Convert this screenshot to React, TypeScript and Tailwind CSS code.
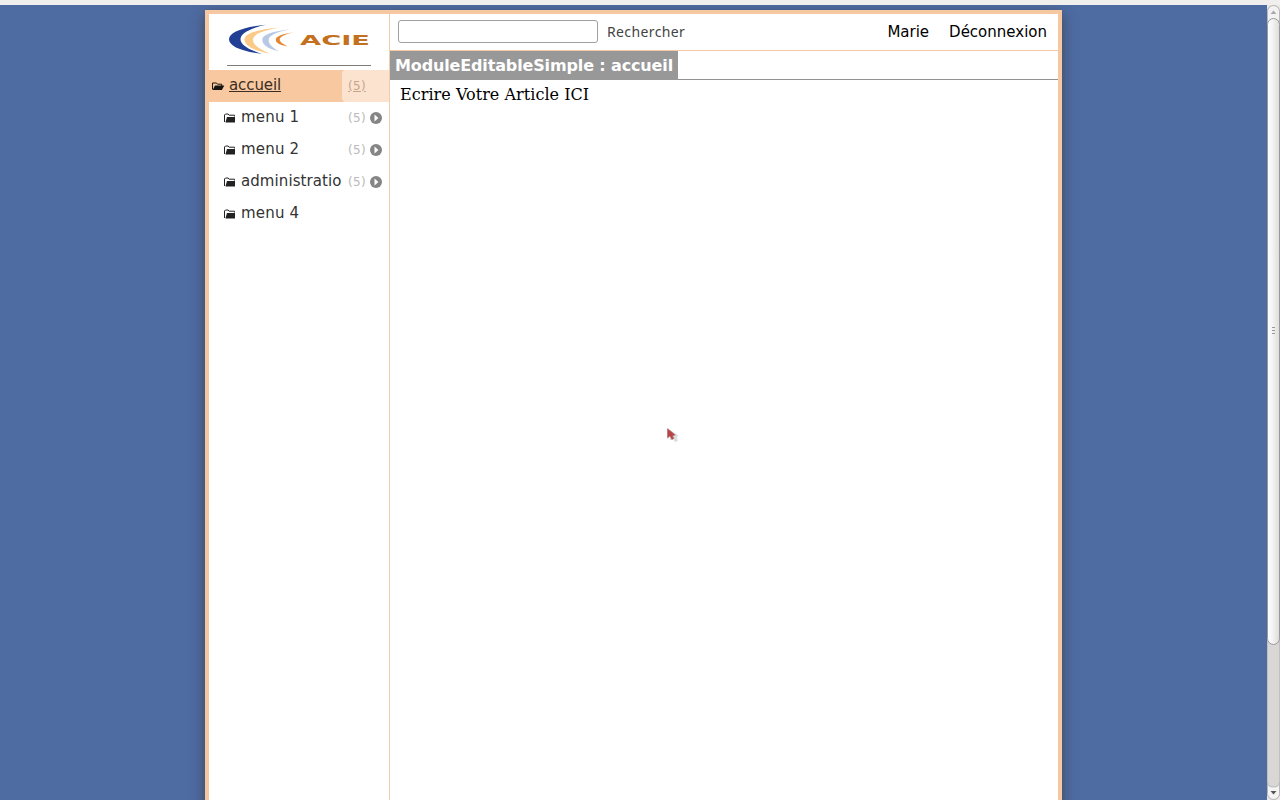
import React from "react";

function Folder({ open = false }: { open?: boolean }) {
  return open ? (
    <svg width="13" height="10" viewBox="0 0 13 10" className="shrink-0">
      <path d="M.5 8.5V2h4l1 1.2h4.2V5" fill="none" stroke="#171512" strokeWidth="1" />
      <path d="M3 4.6h9.300L9.900 9H.6z" fill="#171512" />
    </svg>
  ) : (
    <svg width="12" height="10" viewBox="0 0 12 10" className="shrink-0">
      <path d="M.5 9V2l1-1h2.600l1 1.200h5.400V3.500" fill="none" stroke="#222" strokeWidth="1" />
      <path d="M3 4H11v5.600H1.400z" fill="#222" />
    </svg>
  );
}

function Arrow() {
  return (
    <svg width="12" height="12" viewBox="0 0 12 12" className="ml-1 shrink-0">
      <circle cx="6" cy="6" r="6" fill="#858585" />
      <path d="M4.500 2.600 8.400 6 4.500 9.400z" fill="#fff" />
    </svg>
  );
}

function Logo() {
  return (
    <svg width="144" height="34" viewBox="227 22 144 34">
      <path d="M266 24.700C242 27 229 32.500 229 39.300S241 51.500 262 53.800C248 49.500 240.500 44.500 240.500 39.200C240.500 33.500 249 28.500 266 24.700Z" fill="#213f94" />
      <path d="M280 27.500C256 29.500 244.500 34 244.500 39.500S252 50.500 270 53.500C258 49 253 44.500 253 39.800C253 34.500 262 30.500 280 27.500Z" fill="#fbca86" />
      <path d="M290 29.300C271 31.500 262.300 35 262.300 39.700S267 48.500 279 51.300C272 47.500 268.700 44 268.700 40C268.700 35.500 276 32.300 290 29.300Z" fill="#b9c9e5" />
      <path d="M294 32.200C281 34 275.800 36.500 275.800 39.700S279.500 44.700 287.500 46.500C282 43.500 279.700 41.800 279.700 39.600C279.700 36.500 285 34.300 294 32.200Z" fill="#e58532" />
      <text x="300" y="45" fontFamily="DejaVu Sans" fontWeight="700" fontSize="14" textLength="70" lengthAdjust="spacingAndGlyphs" fill="#c37020">ACIE</text>
    </svg>
  );
}

const items = [
  { label: "menu 1", count: true },
  { label: "menu 2", count: true },
  { label: "administratio", count: true },
  { label: "menu 4", count: false },
];

function Sidebar() {
  return (
    <aside className="w-[181px] shrink-0 border-r border-[#f2cda9]">
      <div className="mx-[18px] mb-1 h-[52px] border-b border-[#7c7c7c] pt-2">
        <Logo />
      </div>
      <div className="flex h-8 bg-[#f8c9a0] text-[#3b2d24]">
        <div className="flex w-[133px] items-start pl-[3px] pt-[5px]">
          <span className="mr-1 mt-[6px]"><Folder open /></span>
          <a className="text-[15px] leading-5 tracking-[-0.1px] underline">accueil</a>
        </div>
        <a className="flex-1 rounded-l-[4px] bg-[#fce3d0] pl-[6px] pt-[6px] text-[12px] leading-5 tracking-[0.3px] text-[#c5a58e] underline">(5)</a>
      </div>
      {items.map((item) => (
        <div key={item.label} className="flex h-8 items-start pl-[15px] pt-[5px] text-[#333]">
          <span className="mr-[5px] mt-[6px]"><Folder /></span>
          <span className={item.label === "administratio" ? "w-[107px] text-[15px] leading-5 tracking-[0.08px]" : "w-[107px] text-[15px] leading-5 tracking-[0.2px]"}>{item.label}</span>
          {item.count && (
            <span className="flex items-center pt-px text-[12px] leading-5 tracking-[0.3px] text-[#b9b9b9]">
              (5)<Arrow />
            </span>
          )}
        </div>
      ))}
    </aside>
  );
}

function Scrollbar() {
  return (
    <svg width="13" height="795" viewBox="0 0 13 795" className="shrink-0">
      <defs>
        <linearGradient id="thumb">
          <stop offset="0" stopColor="#fff" />
          <stop offset=".45" stopColor="#f3f2f1" />
          <stop offset="1" stopColor="#dedbd9" />
        </linearGradient>
      </defs>
      <rect width="13" height="795" fill="#e9e8e7" />
      <rect x=".5" y=".5" width="12" height="794" rx="6" fill="#d9d7d6" stroke="#c2c0bf" />
      <path d="M.5 19V6.500a6 6 0 0 1 12 0V19z" fill="#f3f2f2" stroke="#b8b6b5" />
      <path d="M3.500 9 6.500 5.500 9.500 9z" fill="#aaa" />
      <path d="M.5 777q0 5 6 5t6-5v11.500a6 6 0 0 1-12 0z" fill="#f5f4f4" stroke="#b8b6b5" />
      <path d="M3.500 786 6.500 789.500 9.500 786z" fill="#555" />
      <rect x=".5" y="13.500" width="12" height="626" rx="6" fill="url(#thumb)" stroke="#9b9998" />
      <path d="M5 322.500h3M5 325.500h3M5 328.500h3" stroke="#999" />
    </svg>
  );
}

export default function App() {
  return (
    <div className="relative flex h-[800px] w-[1280px] flex-col overflow-hidden bg-[#f0efee] pt-[5px] font-['DejaVu_Sans',sans-serif]">
      <div className="flex min-h-0 flex-1">
        <div className="flex w-[1267px] overflow-hidden bg-[#4e6ba2] pl-[205px] pt-[5px]">
          <div className="flex h-[820px] w-[857px] border-4 border-[#f5c8a2] bg-white shadow-[0_4px_12px_rgba(60,60,60,0.75)]">
            <Sidebar />
            <main className="min-w-0 flex-1">
              <header className="flex h-[37px] items-start border-b border-[#f5c8a2] pl-2 pr-[10px] pt-[6px]">
                <input aria-label="Rechercher" className="h-[23px] w-[200px] rounded-[3px] border border-[#a0a0a0] bg-white outline-none" />
                <button className="ml-[9px] mt-[2px] font-['Noto_Sans',sans-serif] text-[14px] leading-5 tracking-[0.38px] text-[#444]">Rechercher</button>
                <nav className="ml-auto flex gap-5 pt-[2px] text-[15px] leading-5 text-black">
                  <a>Marie</a>
                  <a className="mr-px">Déconnexion</a>
                </nav>
              </header>
              <div className="flex h-[29px] border-b border-[#929292]">
                <h1 className="h-[29px] w-[288px] shrink-0 whitespace-nowrap bg-[#989898] pl-[5px] text-[16px] font-bold leading-[29px] tracking-[-0.14px] text-white">ModuleEditableSimple : accueil</h1>
              </div>
              <article className="pl-[10px] pt-[3px] font-['DejaVu_Serif',serif] text-[16px] leading-6 tracking-[0.04px] text-black">Ecrire Votre Article ICI</article>
            </main>
          </div>
        </div>
        <Scrollbar />
      </div>
      <svg width="14" height="16" viewBox="0 0 14 16" className="absolute left-[666px] top-[427px]">
        <path d="M4 3v10l3-1 2 3 3-1-1-3 1-3z" fill="#ddd" />
        <path d="M1.500 1.500v9.500l2.500-2 1.800 3.500 2-1-1.300-2.700 2.700-.9z" fill="#b94243" stroke="#a16b6b" strokeWidth=".6" />
      </svg>
    </div>
  );
}
